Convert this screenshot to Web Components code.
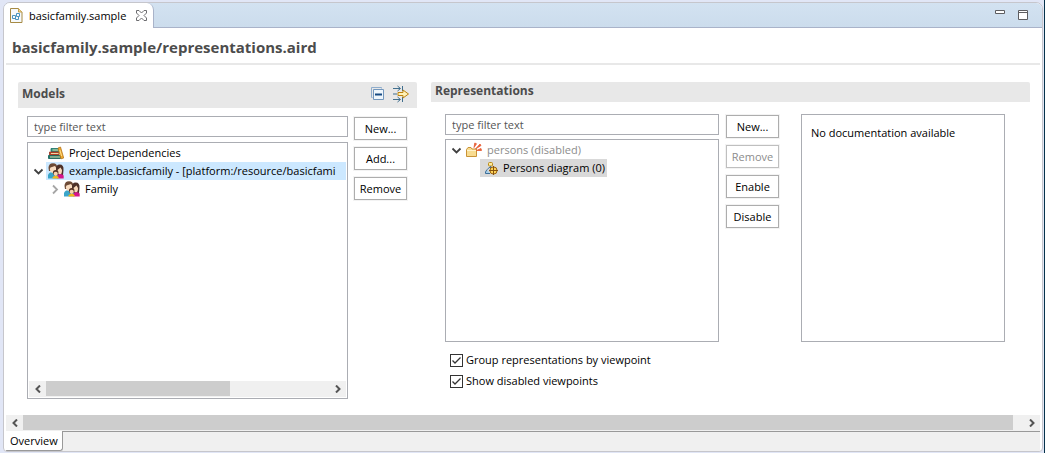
<!DOCTYPE html>
<html lang="en">
<head>
<meta charset="utf-8">
<title>basicfamily.sample</title>
<style>
  body { margin: 0; min-height: 100vh; display: flex; background: #e1e6f6; color: #000;
    font: 11px/18px "Open Sans", "Noto Sans", sans-serif; }
</style>
</head>
<body>
<editor-window>
  <editor-tab slot="tab">basicfamily.sample</editor-tab>
  <form-title>basicfamily.sample/representations.aird</form-title>
  <form-body>
    <form-section kind="models" heading="Models">
      <svg slot="tools" width="16" height="16" viewBox="0 0 16 16" fill="none"><path d="M2.500 11.500h-1v-10h10v1" stroke="#8fadcc"/><path d="M3.500 3.500h10v10h-10z" fill="#eef6fc" stroke="#7397bd"/><path d="M5 8.500h7" stroke="#164a82" stroke-width="2"/></svg>
      <svg slot="tools" width="18" height="18" viewBox="0 0 18 18" fill="none"><path d="M1 3.500h7M5.500 1l3 2.500-3 2.500M1 14.500h7M5.500 12l3 2.500-3 2.500M10.500 1v5M10.500 12v5M1 9h4" stroke="#416f8e"/><path d="M6 7.500h5V5l5.500 4-5.500 4v-2.500H6z" fill="#fff2b8" stroke="#bd8310"/></svg>
      <filter-box slot="filter" label="Filter models"></filter-box>
      <tree-box slot="tree" scroll>
        <tree-row icon="books">Project Dependencies</tree-row>
        <tree-row icon="family" state="open" selected="active">example.basicfamily - [platform:/resource/basicfami</tree-row>
        <tree-row icon="family" state="closed" level="1">Family</tree-row>
      </tree-box>
      <push-button slot="buttons">New...</push-button>
      <push-button slot="buttons">Add...</push-button>
      <push-button slot="buttons">Remove</push-button>
    </form-section>
    <form-section kind="representations" heading="Representations">
      <filter-box slot="filter" label="Filter representations"></filter-box>
      <tree-box slot="tree">
        <tree-row icon="viewpoint" state="open" muted>persons (disabled)</tree-row>
        <tree-row icon="diagram" level="1" selected="idle">Persons diagram (0)</tree-row>
      </tree-box>
      <push-button slot="buttons">New...</push-button>
      <push-button slot="buttons" disabled>Remove</push-button>
      <push-button slot="buttons">Enable</push-button>
      <push-button slot="buttons">Disable</push-button>
      <doc-box slot="doc">No documentation available</doc-box>
      <check-option slot="options">Group representations by viewpoint</check-option>
      <check-option slot="options">Show disabled viewpoints</check-option>
    </form-section>
  </form-body>
  <scroll-bar slot="foot" thumb="99"></scroll-bar>
  <page-tabs slot="foot">Overview</page-tabs>
</editor-window>

<script>
const element = (name, render) => customElements.define(name, class extends HTMLElement {
  connectedCallback() {
    if (this.shadowRoot) return;
    const t = document.createElement('template');
    t.innerHTML = '<style>*{box-sizing:border-box}:host{box-sizing:border-box}button,input{font:inherit}</style>' + render(this);
    this.attachShadow({ mode: 'open' }).append(t.content.cloneNode(true));
  }
});

element('editor-window', () => `
  <style>
    :host { flex: 1; min-width: 0; display: flex; padding: 2px 1px 1px 3px; border-right: 1px solid #06334b; }
    .frame { flex: 1; min-width: 0; display: flex; flex-direction: column; background: #fff; border: 1px solid #c6c6cc;
      border-radius: 7px 7px 4px 4px; overflow: hidden; }
    header { display: flex; height: 25px; flex: none; background: linear-gradient(#d3e2f1, #cbdcec); }
    .rest { flex: 1; display: flex; justify-content: flex-end; gap: 13px; padding: 7px 14px 0 0; border-bottom: 1px solid #a9b3c9; }
    .rest button { width: 10px; height: 10px; padding: 0; border: 0; background: none; display: block; }
    svg { display: block; }
    main { flex: 1; min-width: 0; display: flex; flex-direction: column; padding: 0 2px; }
    footer { padding: 0 2px; }
  </style>
  <div class="frame">
    <header><slot name="tab"></slot>
      <div class="rest">
        <button aria-label="Minimize"><svg width="10" height="10"><path d="M.5.5h9v3h-9z" fill="#fff" stroke="#5d5d60"/></svg></button>
        <button aria-label="Maximize"><svg width="10" height="10"><path d="M.5.5h9v9h-9zM0 2.500h10" fill="#fff" stroke="#5d5d60"/></svg></button>
      </div>
    </header>
    <main><slot></slot></main>
    <footer><slot name="foot"></slot></footer>
  </div>`);

element('editor-tab', () => `
  <style>
    :host { display: flex; align-items: center; gap: 6px; padding: 0 6px; background: #fff;
      border-right: 1px solid #a9b3c9; border-radius: 0 7px 0 0; white-space: nowrap; }
    svg { display: block; }
    button { padding: 0; border: 0; background: none; margin-left: 4px; }
  </style>
  <svg width="13" height="15" viewBox="0 0 13 15" fill="none"><path d="M.5.5h8l3.500 3.500v10.500H.5z" fill="#f6f9fb" stroke="#a68a45"/><path d="M8.500.5V4H12" fill="#f3d98e" stroke="#c09d4c"/><path d="M2.500 7.500h3v3h-3zM6.500 5.500h3v3h-3zM5.500 9.500v2h3v-3" stroke="#4a94bf"/></svg>
  <span><slot></slot></span>
  <button aria-label="Close"><svg width="11" height="11" viewBox="0 0 11 11"><path d="M.5.5h2.500l2.500 2.500L8 .5h2.500V3L8 5.500 10.500 8v2.500H8L5.500 8 3 10.500H.5V8L3 5.500.5 3z" fill="#fff" stroke="#6d6d70"/></svg></button>`);

element('form-title', () => `
  <style>
    :host { display: block; border-bottom: 2px solid #e8e8e8; }
    h1 { margin: 0; padding: 9px 6px 6px; font-size: 15px; line-height: 20px; font-weight: 700; color: #4c4c4c; }
  </style><h1><slot></slot></h1>`);

element('form-body', () => `
  <style>:host { flex: 1; display: grid; grid-template-columns: minmax(0, 399fr) minmax(0, 599fr); gap: 14px; padding: 17px 10px 16px 12px; }</style>
  <slot></slot>`);

element('form-section', host => `
  <style>
    :host { display: flex; flex-direction: column; }
    header { display: flex; align-items: center; gap: 6px; height: 26px; padding: 0 7px 2px 4px; background: #e8e8e8; border-radius: 2px 2px 0 0; }
    h2 { flex: 1; margin: 0; font-size: 12px; line-height: 18px; font-weight: 700; color: #4c4c4c; }
    .grid { flex: 1; display: grid; grid-template-columns: minmax(0, 1fr) 53px; gap: 6px; padding: 8px 10px 0 9px; }
    .main { display: flex; flex-direction: column; gap: 5px; }
    .buttons { display: flex; flex-direction: column; gap: 7px; padding-top: 1px; }
    .representations header { height: 20px; }
    .representations .grid { flex: none; min-height: 228px; grid-template-columns: minmax(0, 274fr) 53px minmax(0, 219fr); gap: 7px; padding: 0 25px 0 14px; margin-top: 12px; }
    .representations .main { gap: 4px; }
    .doc { display: flex; padding-left: 15px; }
    .options { display: flex; flex-direction: column; gap: 3px; padding: 9px 0 0 19px; }
    .wrap { flex: 1; display: flex; flex-direction: column; }
  </style>
  <section class="wrap ${host.getAttribute('kind')}">
    <header><h2>${host.getAttribute('heading')}</h2><slot name="tools"></slot></header>
    <div class="grid">
      <div class="main"><slot name="filter"></slot><slot name="tree"></slot></div>
      <div class="buttons"><slot name="buttons"></slot></div>
      ${host.getAttribute('kind') === 'representations' ? '<div class="doc"><slot name="doc"></slot></div>' : ''}
    </div>
    ${host.getAttribute('kind') === 'representations' ? '<div class="options"><slot name="options"></slot></div>' : ''}
  </section>`);

element('filter-box', host => `
  <style>
    :host { display: block; }
    input { display: block; width: 100%; height: 21px; padding: 0 6px; border: 1px solid #abadb3; border-radius: 0; background: #fff; outline: 0; }
    input::placeholder { color: #555; opacity: 1; }
  </style><input type="text" placeholder="type filter text" aria-label="${host.getAttribute('label')}">`);

element('tree-box', host => `
  <style>
    :host { flex: 1; display: flex; flex-direction: column; border: 1px solid #abadb3; padding: 1px; }
    .rows { flex: 1; overflow: hidden; }
  </style><div class="rows" role="tree"><slot></slot></div>
  ${host.hasAttribute('scroll') ? '<scroll-bar thumb="65"></scroll-bar>' : ''}`);

const icons = {
  books: '<path d="M3 3.500h8v3H3z" fill="#2f9683" stroke="#167064" stroke-width=".8"/><path d="M4.500 5h6" stroke="#e9dcae"/><path d="M1.500 7h9v3h-9z" fill="#c4482c" stroke="#953320" stroke-width=".8"/><path d="M3 8.500h7.500" stroke="#eed5a4"/><path d="M.5 10.500h12v3H.5z" fill="#1c7a6d" stroke="#0f5a52" stroke-width=".8"/><path d="M2 12h10" stroke="#e9dcae"/><path d="M10 3l2.500-1 3.200 11-2.700.8z" fill="#f2ab2f" stroke="#b5751b" stroke-width=".8"/><path d="M11.800 5l1.800 6" stroke="#ffe08a"/>',
  family: '<path d="M0 15.500V12q1-3 5-3t5 3v3.500z" fill="#3aa5c9"/><path d="M.5 5Q.5.300 5 .3T9.300 5L9 8H1z" fill="#6d4a35"/><path d="M2.500 4.500L7 3l1.300 2q0 5-3 5T1.800 6z" fill="#f8dcc0"/><path d="M8 7q-.5-5.500 3.700-5.500T15.500 7l-.5 5H9z" fill="#4d3129"/><path d="M9.500 7l3-2.500L14 7q0 4.500-2.300 4.500T9.500 7z" fill="#f8d8ba"/><path d="M9.500 15.500v-3q1-1.500 3-1.500t3.200 1.500v3z" fill="#d4168a"/><circle cx="7.700" cy="9.800" r="2.800" fill="#573527"/><circle cx="7.700" cy="10.800" r="2.100" fill="#f8d4b0"/><path d="M4.500 15.500V14.200q1-1.500 3.200-1.500t3 1.500v1.300z" fill="#f3b719"/>',
  viewpoint: '<path d="M.5 14.500V7.500l1.500-2h3l1 1.500h4.500v7.500z" fill="#f8dc91" stroke="#c99336"/><path d="M1 8.500h9" stroke="#fff4cc"/><path d="M8 5.500l.8-4.500 1.700.8zM9.500 7l4.500-5 1 1.500zM10.500 8.500l4.500-2 .5 2z" fill="#ed643b" stroke="#e45a32" stroke-width=".8"/>',
  diagram: '<rect x="6.500" y="2.500" width="4" height="3.500" rx="1" fill="#ffe99a" stroke="#b98b18"/><path d="M8.500 6v2M5.500 9.500l1.500-2h3" fill="none" stroke="#47779c"/><path d="M5 9.500L3.500 12v1.500h4.500" fill="#a8cee8" stroke="#3d6f99"/><circle cx="11.500" cy="10.500" r="3.600" fill="#ffd65a" stroke="#9b610e"/><path d="M7 10.500h9M11.500 6v9" stroke="#87530c"/>'
};
element('tree-row', host => {
  const state = host.getAttribute('state');
  const selected = host.getAttribute('selected');
  const sel = { active: '#cce8ff', idle: '#d9d9d9' }[selected] || 'transparent';
  const twisty = state === 'open' ? '<path d="M1.500 3.500L5.500 7.500 9.500 3.500" stroke="#404040" stroke-width="1.800"/>'
    : state === 'closed' ? '<path d="M4 1.500L8 5.500 4 9.500" stroke="#a6a6a6" stroke-width="1.800"/>' : '';
  return `
  <style>
    :host { display: flex; height: 18px; padding-left: ${1 + 16 * (host.getAttribute('level') || 0)}px; }
    .twisty { flex: none; width: 16px; display: flex; align-items: center; justify-content: center; }
    .label { flex: ${selected === 'active' ? 1 : 'none'}; display: flex; align-items: center; gap: 5px; padding: 0 2px; background: ${sel};
      white-space: nowrap; overflow: hidden; color: ${host.hasAttribute('muted') ? '#8c8c8c' : 'inherit'}; }
    svg { flex: none; }
  </style>
  <span class="twisty"><svg width="11" height="11" fill="none">${twisty}</svg></span>
  <span class="label"><svg width="16" height="16" viewBox="0 0 16 16">${icons[host.getAttribute('icon')]}</svg><span><slot></slot></span></span>`;
});

element('push-button', host => `
  <style>
    :host { display: block; }
    button { display: block; width: 100%; height: 23px; padding: 0; border: 1px solid #adadad; background: #fff; color: #000;
      outline: 1px solid #f3f3f3; white-space: nowrap; line-height: 18px; }
    button:disabled { border-color: #bfbfbf; color: #8c8c8c; }
  </style><button type="button" ${host.hasAttribute('disabled') ? 'disabled' : ''}><slot></slot></button>`);

element('doc-box', () => `
  <style>:host { flex: 1; min-width: 0; display: block; padding: 9px; border: 1px solid #abadb3; }</style><slot></slot>`);

element('check-option', () => `
  <style>
    :host { display: block; }
    label { display: flex; align-items: center; gap: 3px; }
    .box { display: grid; width: 13px; height: 13px; }
    .box > * { grid-area: 1 / 1; }
    input { appearance: none; width: 13px; height: 13px; margin: 0; border: 1px solid #333; background: #fff; }
    svg { pointer-events: none; z-index: 1; visibility: hidden; }
    input:checked + svg { visibility: visible; }
  </style>
  <label><span class="box"><input type="checkbox" checked><svg width="13" height="13" fill="none"><path d="M2.500 6.500L5 9l5.500-5.500" stroke="#333" stroke-width="1.300"/></svg></span><span><slot></slot></span></label>`);

element('scroll-bar', host => `
  <style>
    :host { display: flex; height: 16px; background: #f0f0f0; padding-bottom: 1px; }
    button { flex: none; width: 17px; padding: 0; border: 0; background: none; display: flex; align-items: center; justify-content: center; }
    .track { flex: 1; display: flex; }
    .thumb { width: ${host.getAttribute('thumb')}%; background: #cdcdcd; }
  </style>
  <button type="button" aria-label="Scroll left"><svg width="8" height="8" fill="none"><path d="M6 .5L2.500 4 6 7.500" stroke="#555" stroke-width="2"/></svg></button>
  <div class="track"><div class="thumb"></div></div>
  <button type="button" aria-label="Scroll right"><svg width="8" height="8" fill="none"><path d="M2 .5L5.500 4 2 7.500" stroke="#555" stroke-width="2"/></svg></button>`);

element('page-tabs', () => `
  <style>
    :host { display: flex; height: 20px; background: #f0f0f0; }
    button { padding: 0 4px; border: 0; border-right: 1px solid #999; border-bottom: 1px solid #999; border-bottom-right-radius: 3px;
      background: #fff; color: #000; line-height: 18px; }
    .rest { flex: 1; border-top: 1px solid #999; }
  </style>
  <button type="button"><slot></slot></button><div class="rest"></div>`);
</script>
</body>
</html>
